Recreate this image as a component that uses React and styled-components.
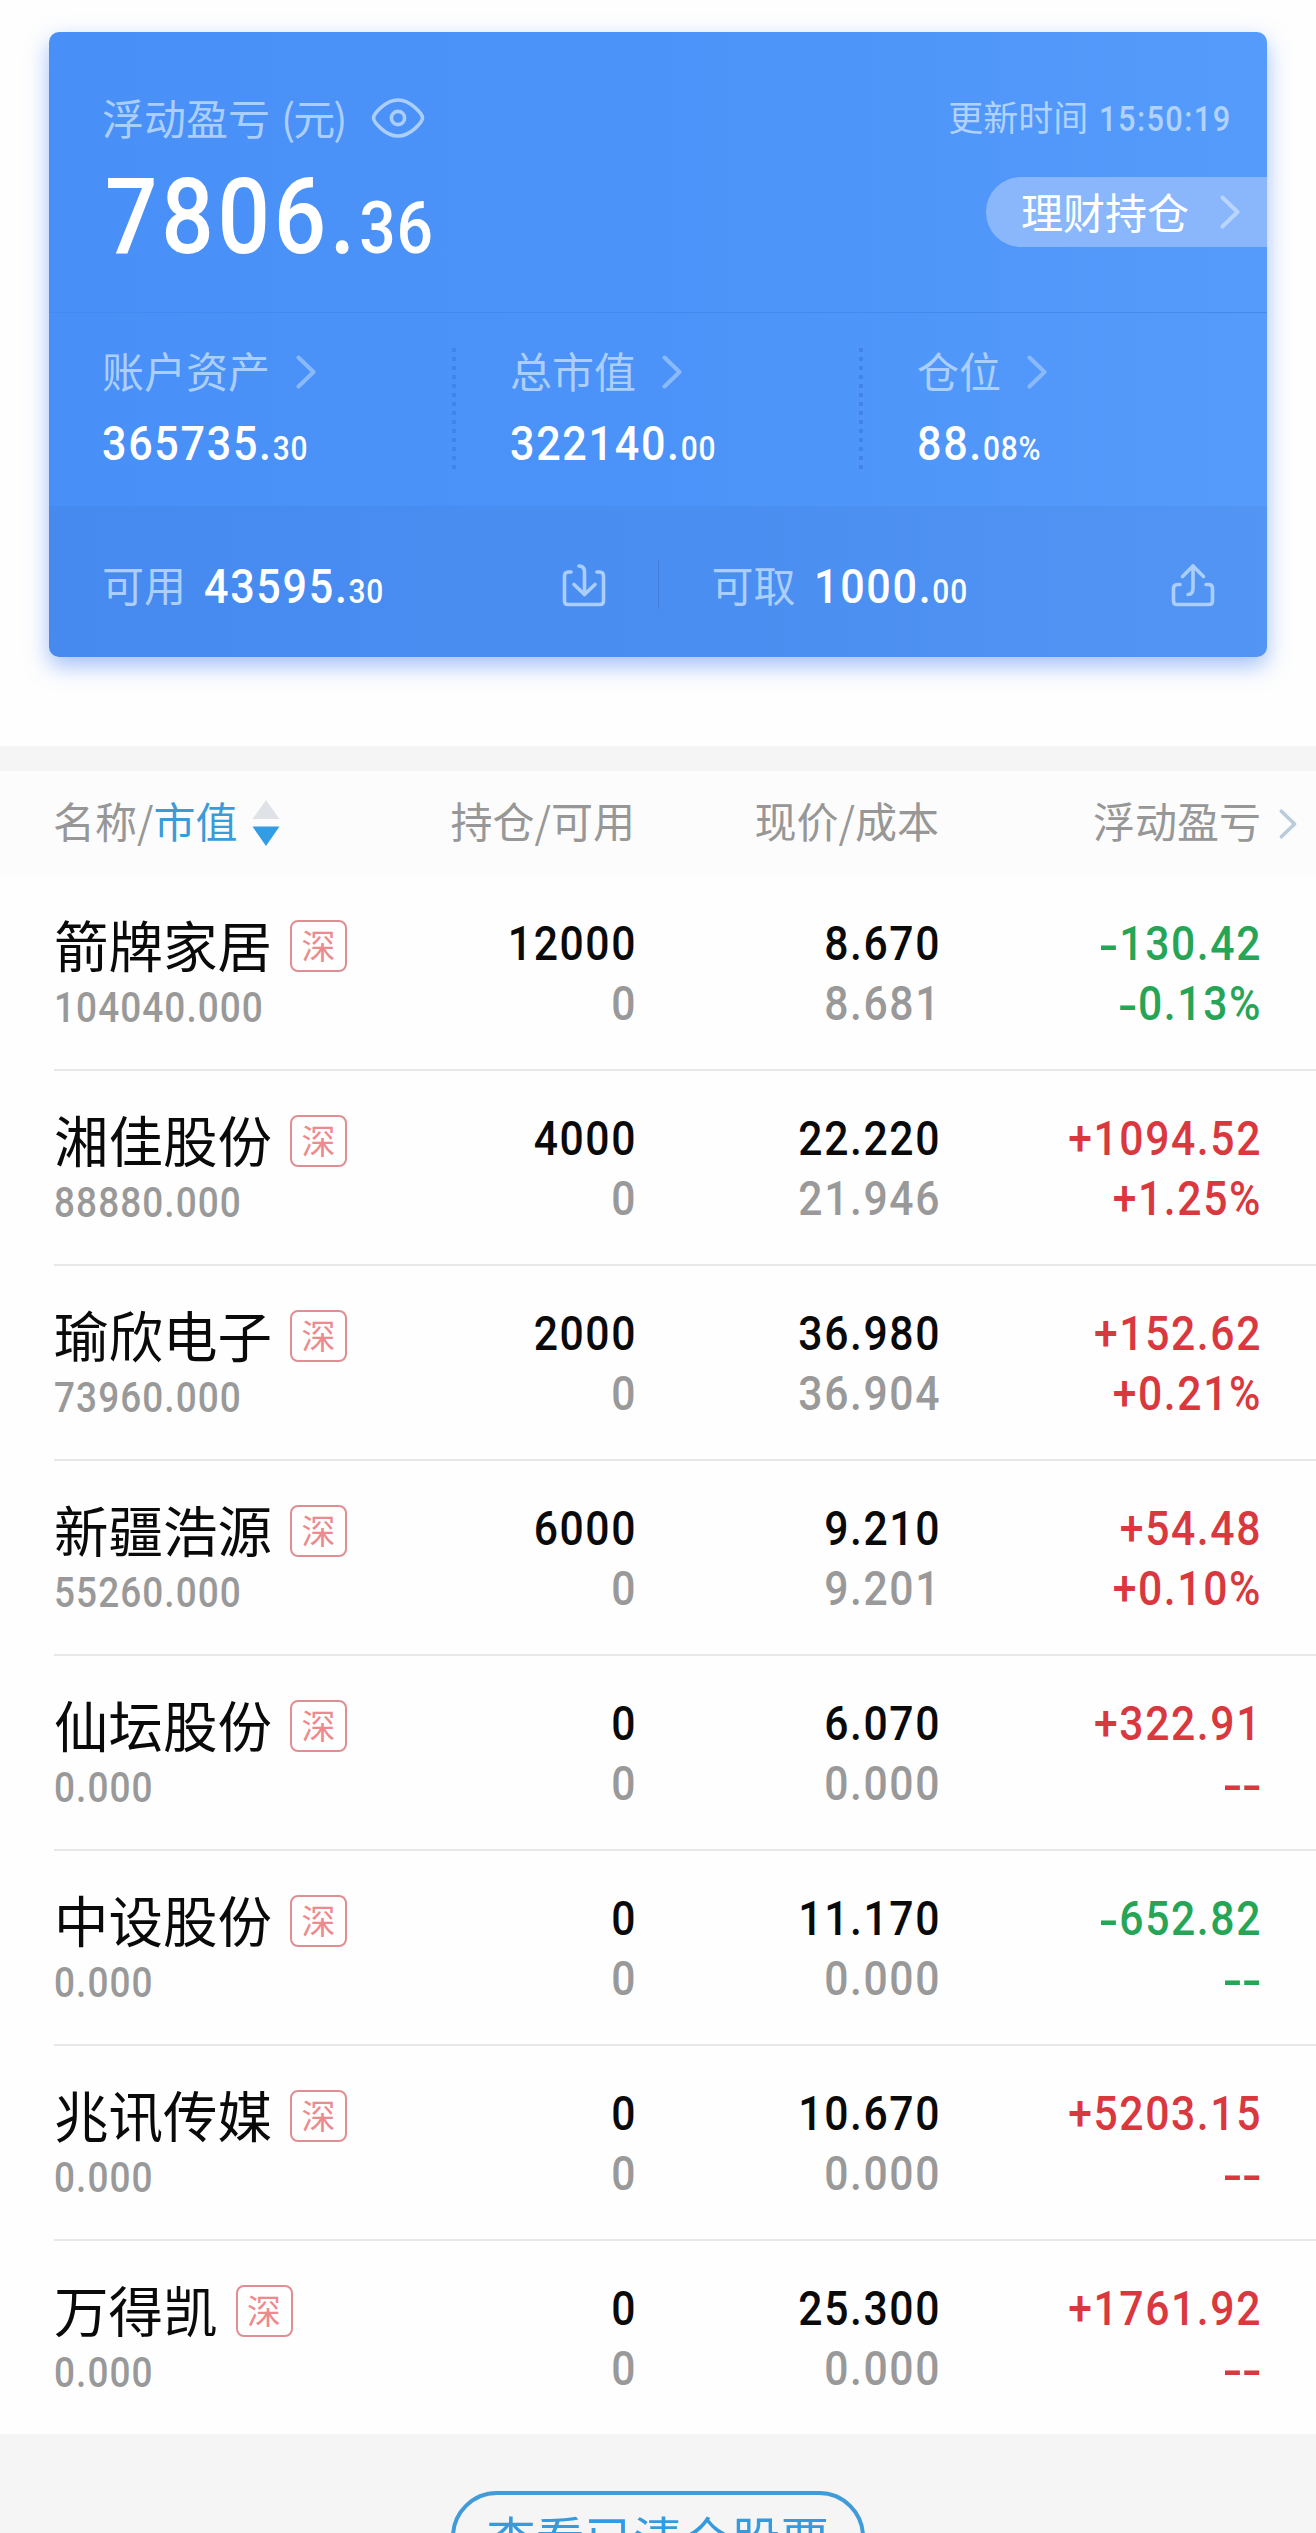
import React from "react";
import styled, { createGlobalStyle } from "styled-components";

const holdings = [
  { name: "箭牌家居", value: "104040.000", amount: "12000", price: "8.670", cost: "8.681", profit: "-130.42", rate: "-0.13%" },
  { name: "湘佳股份", value: "88880.000", amount: "4000", price: "22.220", cost: "21.946", profit: "+1094.52", rate: "+1.25%" },
  { name: "瑜欣电子", value: "73960.000", amount: "2000", price: "36.980", cost: "36.904", profit: "+152.62", rate: "+0.21%" },
  { name: "新疆浩源", value: "55260.000", amount: "6000", price: "9.210", cost: "9.201", profit: "+54.48", rate: "+0.10%" },
  { name: "仙坛股份", value: "0.000", amount: "0", price: "6.070", cost: "0.000", profit: "+322.91", rate: "--" },
  { name: "中设股份", value: "0.000", amount: "0", price: "11.170", cost: "0.000", profit: "-652.82", rate: "--" },
  { name: "兆讯传媒", value: "0.000", amount: "0", price: "10.670", cost: "0.000", profit: "+5203.15", rate: "--" },
  { name: "万得凯", value: "0.000", amount: "0", price: "25.300", cost: "0.000", profit: "+1761.92", rate: "--" },
];

const stats = [
  { label: "账户资产", whole: "365735.", rest: "30" },
  { label: "总市值", whole: "322140.", rest: "00" },
  { label: "仓位", whole: "88.", rest: "08%" },
];

function Chevron({ color, width = 20, height = 34 }) {
  return (
    <svg width={width} height={height} viewBox='0 0 20 34' fill='none'>
      <path d='M2.5 2.5 L17.5 17 L2.5 31.5' stroke={color} strokeWidth='4' strokeLinecap='round' strokeLinejoin='round' />
    </svg>
  );
}

function EyeIcon() {
  return (
    <svg width='54' height='40' viewBox='0 0 54 40' fill='none' stroke='#abcefc' strokeWidth='3.6'>
      <path d='M2.5 20 C2.5 16.5 14 2 27 2 C40 2 51.5 16.5 51.5 20 C51.5 23.5 40 38 27 38 C14 38 2.5 23.5 2.5 20 Z' />
      <circle cx='27' cy='20' r='6.6' />
    </svg>
  );
}

function DepositIcon() {
  return (
    <svg width='44' height='44' viewBox='0 0 44 44' fill='none' stroke='#abcefc' strokeWidth='3.6' strokeLinecap='round' strokeLinejoin='round'>
      <path d='M9 9 H6.5 Q2.5 9 2.5 13 V38 Q2.5 41.5 6 41.5 H38 Q41.5 41.5 41.5 38 V13 Q41.5 9 37.5 9 H35' />
      <path d='M17 3 Q22.5 3 22.5 9 V31' />
      <path d='M12 21.5 L22.5 31.5 L33 21.5' />
    </svg>
  );
}

function WithdrawIcon() {
  return (
    <svg width='44' height='44' viewBox='0 0 44 44' fill='none' stroke='#abcefc' strokeWidth='3.6' strokeLinecap='round' strokeLinejoin='round'>
      <path d='M9 21.5 H6.5 Q2.5 21.5 2.5 25.5 V38 Q2.5 41.5 6 41.5 H38 Q41.5 41.5 41.5 38 V25.5 Q41.5 21.5 37.5 21.5 H35' />
      <path d='M17 31.5 Q22 31.5 22 25 V3' />
      <path d='M11.5 13.5 L22 3 L32.5 13.5' />
    </svg>
  );
}

function SortIcon() {
  return (
    <svg width='28' height='48' viewBox='0 0 28 48'>
      <path d='M14 1 L27.5 20 H0.5 Z' fill='#dfe3e7' />
      <path d='M14 47 L27.5 27.5 H0.5 Z' fill='#329ce4' />
    </svg>
  );
}

// minus signs are drawn wider than the font's own hyphen
function Signed({ text }) {
  return (
    <span>
      {text.split("").map((char, index) => (char === "-" ? <Minus key={index}>-</Minus> : char))}
    </span>
  );
}

export default function App() {
  return (
    <Page>
      <GlobalStyle />
      <Card>
        <Summary>
          <SummaryTop>
            <Label>
              浮动盈亏<Unit>(<span>元</span>)</Unit>
            </Label>
            <EyeIcon />
            <UpdateTime>
              更新时间<time>15:50:19</time>
            </UpdateTime>
          </SummaryTop>
          <SummaryMain>
            <Total>
              7806.<small>36</small>
            </Total>
            <WealthLink>
              理财持仓
              <Chevron color='#b9d5fd' />
            </WealthLink>
          </SummaryMain>
        </Summary>
        <Stats>
          {stats.map((item) => (
            <Stat key={item.label}>
              <StatLabel>
                {item.label}
                <Chevron color='#8bbafc' />
              </StatLabel>
              <Figure>
                {item.whole}
                <small>{item.rest}</small>
              </Figure>
            </Stat>
          ))}
        </Stats>
        <Funds>
          <Fund>
            <Label>可用</Label>
            <Figure>
              43595.<small>30</small>
            </Figure>
            <DepositIcon />
          </Fund>
          <FundDivider />
          <Fund>
            <Label>可取</Label>
            <Figure>
              1000.<small>00</small>
            </Figure>
            <WithdrawIcon />
          </Fund>
        </Funds>
      </Card>
      <TableHead>
        <HeadCell $first>
          名称/<b>市值</b>
          <SortIcon />
        </HeadCell>
        <HeadCell>持仓/可用</HeadCell>
        <HeadCell>现价/成本</HeadCell>
        <HeadCell>浮动盈亏</HeadCell>
        <Chevron color='#b9cbdc' width={18} height={30} />
      </TableHead>
      <Rows>
        {holdings.map((item) => (
          <Row key={item.name}>
            <Stock>
              <StockName>
                {item.name}
                <Badge>深</Badge>
              </StockName>
              <StockValue>{item.value}</StockValue>
            </Stock>
            <Cell>
              <span>{item.amount}</span>
              <Muted>0</Muted>
            </Cell>
            <Cell>
              <span>{item.price}</span>
              <Muted>{item.cost}</Muted>
            </Cell>
            <Cell $color={item.profit.startsWith("-") ? "#27a557" : "#d9383f"}>
              <Signed text={item.profit} />
              <Signed text={item.rate} />
            </Cell>
          </Row>
        ))}
      </Rows>
      <Footer>
        <ClearedButton>查看已清仓股票</ClearedButton>
      </Footer>
    </Page>
  );
}

const GlobalStyle = createGlobalStyle`
  * {
    box-sizing: border-box;
  }
  body {
    margin: 0;
    background: #fff;
    font-family: Roboto, "Noto Sans CJK SC", sans-serif;
  }
`;

const Page = styled.main`
  width: 1316px;
  height: 2533px;
  overflow: hidden;
  display: flex;
  flex-direction: column;
  background: #fefefe;
`;

const Card = styled.section`
  flex: none;
  width: 1218px;
  height: 625px;
  margin: 32px 49px 89px;
  border-radius: 10px;
  overflow: hidden;
  color: #fff;
  background: linear-gradient(90deg, #488ff7, #4c93f9 50%, #559bfb);
  box-shadow: 0 9px 22px rgba(72, 132, 246, 0.5);
`;

const Summary = styled.div`
  height: 281px;
  padding-top: 56px;
  border-bottom: 1px solid #4489ee;
`;

const SummaryTop = styled.div`
  display: flex;
  align-items: center;
  height: 60px;
  padding: 0 35px 0 53px;
  svg {
    margin-left: 24px;
  }
`;

const Label = styled.div`
  display: flex;
  padding-bottom: 2px;
  white-space: nowrap;
  font-family: "Noto Sans CJK SC", sans-serif;
  font-size: 42px;
  line-height: 56px;
  color: #abcefc;
`;

const Unit = styled.span`
  display: flex;
  margin-left: 11px;
  span {
    margin: 0 -2px;
  }
`;

const UpdateTime = styled.div`
  display: flex;
  align-items: center;
  margin-left: auto;
  padding-top: 3px;
  font-size: 35px;
  line-height: 57px;
  color: #b0d2fd;
  time {
    margin-left: -7px;
    font-weight: 500;
    letter-spacing: 1.6px;
    transform: scaleX(0.88);
    transform-origin: right;
  }
`;

const SummaryMain = styled.div`
  display: flex;
  justify-content: space-between;
  align-items: flex-start;
  padding-left: 56px;
`;

const Total = styled.div`
  margin-top: 10px;
  font-size: 105px;
  font-weight: 500;
  line-height: 120px;
  letter-spacing: 4.2px;
  transform: scaleX(0.88);
  transform-origin: left;
  small {
    font-size: 73px;
    letter-spacing: 1px;
  }
`;

const WealthLink = styled.div`
  display: flex;
  align-items: center;
  justify-content: space-between;
  width: 281px;
  height: 70px;
  margin-top: 29px;
  padding: 0 27px 4px 35px;
  border-radius: 35px 0 0 35px;
  background: #8ab7fc;
  font-family: "Noto Sans CJK SC", sans-serif;
  font-size: 42px;
  svg {
    margin-top: 4px;
  }
`;

const Stats = styled.div`
  display: flex;
  height: 193px;
  padding-top: 28px;
`;

const Stat = styled.div`
  flex: none;
  width: 403px;
  padding-left: 53px;
  height: 130px;
  & + & {
    width: 407px;
    padding-left: 58px;
    background: repeating-linear-gradient(#4283e6 0 4px, transparent 4px 9px) 0 7px / 4px 121px no-repeat;
  }
`;

const StatLabel = styled.div`
  display: flex;
  align-items: center;
  gap: 26px;
  height: 60px;
  padding-bottom: 2px;
  color: #abcefc;
  font-family: "Noto Sans CJK SC", sans-serif;
  font-size: 42px;
  line-height: 56px;
  svg {
    margin-top: 3px;
  }
`;

const Figure = styled.div`
  margin-top: 13px;
  font-size: 49px;
  font-weight: 500;
  line-height: 60px;
  letter-spacing: 1.9px;
  white-space: nowrap;
  transform: scaleX(0.88);
  transform-origin: left;
  small {
    font-size: 34px;
    letter-spacing: 0.9px;
  }
`;

const Funds = styled.div`
  display: flex;
  align-items: center;
  height: 151px;
  padding-top: 6px;
  background: rgba(60, 110, 190, 0.13);
`;

const Fund = styled.div`
  flex: 1;
  display: flex;
  align-items: center;
  padding: 0 52px 0 53px;
  ${Figure} {
    margin: 9px 0 0 18px;
  }
  svg {
    margin-left: auto;
  }
`;

const FundDivider = styled.div`
  width: 1px;
  height: 49px;
  background: #447fdd;
`;

const TableHead = styled.div`
  flex: none;
  display: grid;
  grid-template-columns: 301px 281px 304px 322px 18px;
  align-items: center;
  height: 130px;
  padding-left: 53px;
  border-top: 25px solid #f5f5f5;
  background: #fcfcfc;
  > svg {
    margin-left: 18px;
  }
`;

const HeadCell = styled.div`
  display: flex;
  align-items: center;
  justify-content: ${(props) => (props.$first ? "flex-start" : "flex-end")};
  padding-bottom: 8px;
  white-space: nowrap;
  font-family: "Noto Sans CJK SC", sans-serif;
  font-size: 42px;
  color: #979797;
  b {
    font-weight: 400;
    color: #3b9bd9;
  }
  svg {
    margin: 6px 0 0 15px;
  }
`;

const Rows = styled.div`
  flex: none;
  height: 1558px;
  padding-left: 54px;
`;

const Row = styled.div`
  display: grid;
  grid-template-columns: 300px 281px 304px 321px;
  height: 195px;
  padding-top: 38px;
  border-bottom: 2px solid #e8e8e8;
  &:last-child {
    height: 193px;
    border-bottom: 0;
  }
`;

const Stock = styled.div`
  display: flex;
  flex-direction: column;
`;

const StockName = styled.div`
  display: flex;
  align-items: center;
  gap: 18px;
  height: 64px;
  padding-bottom: 5px;
  white-space: nowrap;
  font-family: "Noto Sans CJK SC", sans-serif;
  font-size: 54.5px;
  line-height: 58px;
  color: #0a0a0a;
`;

const Badge = styled.span`
  display: flex;
  align-items: center;
  justify-content: center;
  width: 57px;
  height: 52px;
  margin-top: 5px;
  padding-bottom: 3px;
  border: 2px solid #df8f93;
  border-radius: 8px;
  font-size: 34px;
  line-height: 44px;
  color: #ec8a8e;
`;

const StockValue = styled.div`
  margin-top: 5px;
  font-size: 42px;
  font-weight: 500;
  line-height: 50px;
  letter-spacing: 1.2px;
  color: #999;
  transform: scaleX(0.88);
  transform-origin: left;
`;

const Cell = styled.div`
  display: flex;
  flex-direction: column;
  align-items: flex-end;
  margin-right: -2px;
  font-size: 48.5px;
  font-weight: 500;
  line-height: 60px;
  letter-spacing: 1.8px;
  color: ${(props) => props.$color || "#0a0a0a"};
  transform: scaleX(0.88);
  transform-origin: right;
`;

const Muted = styled.span`
  color: #999;
`;

const Minus = styled.span`
  display: inline-block;
  width: 21.5px;
  text-align: center;
  transform: translateY(2px) scaleX(1.35);
`;

const Footer = styled.footer`
  flex: 1;
  display: flex;
  justify-content: center;
  align-items: flex-start;
  padding-top: 57px;
  background: #f5f5f5;
`;

const ClearedButton = styled.button`
  flex: none;
  width: 414px;
  height: 92px;
  padding: 0;
  border: 4px solid #409bd8;
  border-radius: 46px;
  background: transparent;
  font-family: "Noto Sans CJK SC", sans-serif;
  font-size: 49px;
  line-height: 84px;
  color: #359bde;
`;
